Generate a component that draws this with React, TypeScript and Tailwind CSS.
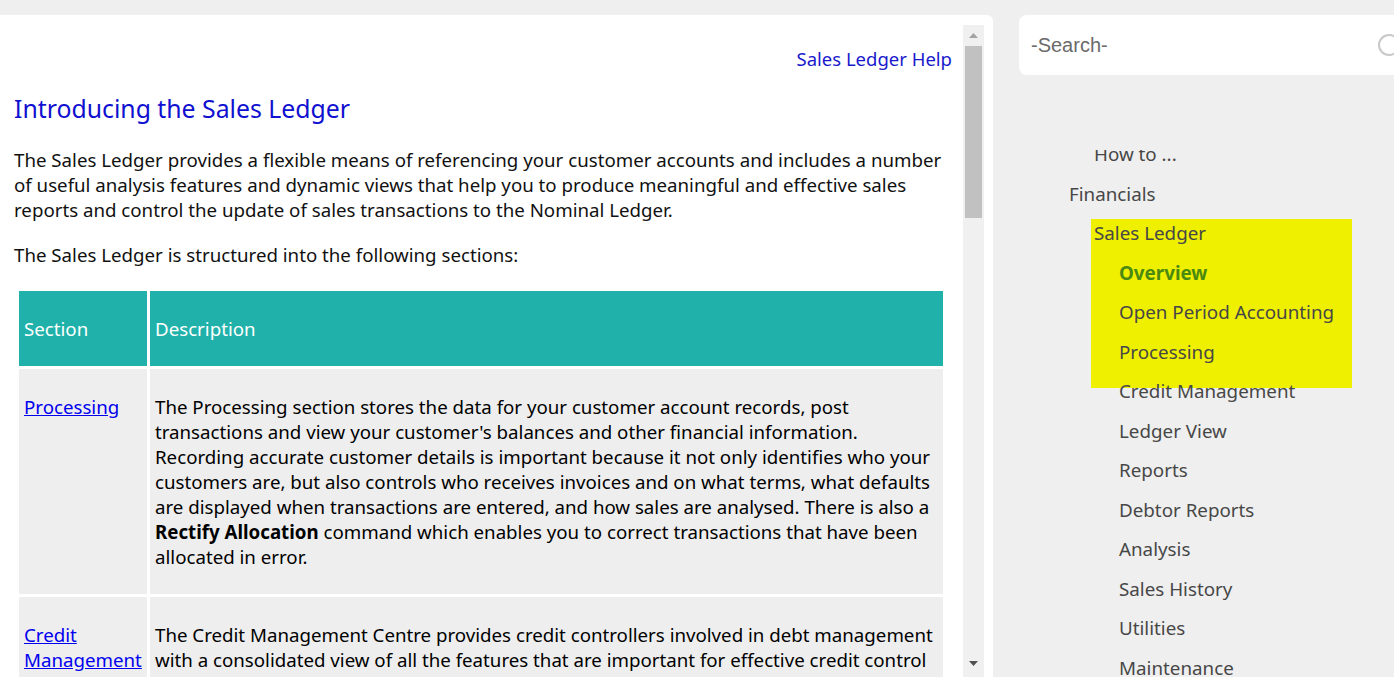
import React from "react";

const body = { fontFamily: '"Noto Sans", "Open Sans", sans-serif' };

const navItems: { label: string; indent: string; bold?: boolean }[] = [
  { label: "How to ...", indent: "pl-[75px]" },
  { label: "Financials", indent: "pl-[50px]" },
  { label: "Sales Ledger", indent: "pl-[75px]" },
  { label: "Overview", indent: "pl-[100px]", bold: true },
  { label: "Open Period Accounting", indent: "pl-[100px]" },
  { label: "Processing", indent: "pl-[100px]" },
  { label: "Credit Management", indent: "pl-[100px]" },
  { label: "Ledger View", indent: "pl-[100px]" },
  { label: "Reports", indent: "pl-[100px]" },
  { label: "Debtor Reports", indent: "pl-[100px]" },
  { label: "Analysis", indent: "pl-[100px]" },
  { label: "Sales History", indent: "pl-[100px]" },
  { label: "Utilities", indent: "pl-[100px]" },
  { label: "Maintenance", indent: "pl-[100px]" },
  { label: "Customer Details", indent: "pl-[100px]" },
];

function Scrollbar() {
  return (
    <div className="mt-[10px] flex w-[21px] flex-col items-center bg-[#f0f0f0]">
      <div className="flex h-[21px] w-full items-center justify-center">
        <svg width="9" height="5" viewBox="0 0 9 5">
          <path d="M0 5 L4.5 0 L9 5 Z" fill="#a3a3a3" />
        </svg>
      </div>
      <div className="h-[172px] w-[17px] bg-[#c1c1c1]" />
      <div className="flex-1" />
      <div className="flex h-[21px] w-full items-center justify-center pb-[6px]">
        <svg width="9" height="5" viewBox="0 0 9 5">
          <path d="M0 0 L9 0 L4.5 5 Z" fill="#505050" />
        </svg>
      </div>
    </div>
  );
}

function Lines({ lines }: { lines: React.ReactNode[] }) {
  return (
    <>
      {lines.map((l, i) => (
        <div key={i} className="whitespace-nowrap">
          {l}
        </div>
      ))}
    </>
  );
}

export default function App() {
  return (
    <div
      className="flex h-[677px] w-[1394px] overflow-hidden bg-[#efefef] pt-[15px]"
      style={body}
    >
      {/* content panel */}
      <div className="flex w-[993px] shrink-0 rounded-tr-[6px] bg-white">
        <div className="w-[963px] overflow-hidden pl-[14px] pr-[11px] text-[18.7px] leading-[25px] text-[#111]">
          <div className="pt-[31px] text-right text-[18.5px] text-[#1a1acc]">
            Sales Ledger Help
          </div>
          <h1 className="mt-[21px] text-[24.8px] leading-[32px] text-[#1010d0]">
            Introducing the Sales Ledger
          </h1>
          <div className="mt-[23px]">
            <Lines
              lines={[
                "The Sales Ledger provides a flexible means of referencing your customer accounts and includes a number",
                "of useful analysis features and dynamic views that help you to produce meaningful and effective sales",
                "reports and control the update of sales transactions to the Nominal Ledger.",
              ]}
            />
          </div>
          <p className="mt-[20px]">
            The Sales Ledger is structured into the following sections:
          </p>
          <table className="mt-[21px] ml-[2px] border-separate border-spacing-[3px] text-black">
            <thead>
              <tr className="bg-[#20b2aa] text-white">
                <th className="w-[128px] px-[5px] py-[25px] text-left font-normal">
                  Section
                </th>
                <th className="w-[793px] px-[5px] py-[25px] text-left font-normal">
                  Description
                </th>
              </tr>
            </thead>
            <tbody>
              <tr className="bg-[#eeeeee] align-top">
                <td className="px-[5px] py-[25px]">
                  <a className="text-[#0000ee] underline" href="#">
                    Processing
                  </a>
                </td>
                <td className="px-[5px] py-[25px]">
                  <Lines
                    lines={[
                      "The Processing section stores the data for your customer account records, post",
                      "transactions and view your customer's balances and other financial information.",
                      "Recording accurate customer details is important because it not only identifies who your",
                      "customers are, but also controls who receives invoices and on what terms, what defaults",
                      "are displayed when transactions are entered, and how sales are analysed. There is also a",
                      <>
                        <b>Rectify Allocation</b> command which enables you to
                        correct transactions that have been
                      </>,
                      "allocated in error.",
                    ]}
                  />
                </td>
              </tr>
              <tr className="bg-[#eeeeee] align-top">
                <td className="px-[5px] py-[25px]">
                  <a className="text-[#0000ee] underline" href="#">
                    Credit
                    <br />
                    Management
                  </a>
                </td>
                <td className="px-[5px] py-[25px]">
                  <Lines
                    lines={[
                      "The Credit Management Centre provides credit controllers involved in debt management",
                      "with a consolidated view of all the features that are important for effective credit control",
                      "and the collection of outstanding debts.",
                    ]}
                  />
                </td>
              </tr>
            </tbody>
          </table>
        </div>
        <Scrollbar />
      </div>

      {/* navigation panel */}
      <div className="ml-[26px] flex w-[420px] shrink-0 flex-col">
        <div className="flex h-[60px] items-center rounded-l-[8px] bg-white pl-[12px]">
          <span
            className="flex-1 text-[20px] text-[#6a6a6a]"
            style={{ fontFamily: '"Liberation Sans", Arial, sans-serif' }}
          >
            -Search-
          </span>
          <svg width="24" height="24" viewBox="0 0 24 24" className="mr-[38px]">
            <circle cx="12" cy="12" r="10" fill="none" stroke="#c8c8c8" strokeWidth="2" />
          </svg>
        </div>
        <div className="relative mt-[75px] flex-1 overflow-hidden text-[18.8px] text-[#474747]">
          <div className="absolute left-[72px] top-[69px] h-[169px] w-[261px] bg-[#efef00]" />
          <div className="relative -mt-[15px]">
            {navItems.map((n) => (
              <div
                key={n.label}
                className={`${n.indent} h-[39.5px] leading-[39.5px] whitespace-nowrap ${
                  n.bold ? "font-bold text-[#4a8a10]" : ""
                }`}
              >
                {n.label}
              </div>
            ))}
          </div>
        </div>
      </div>
    </div>
  );
}
